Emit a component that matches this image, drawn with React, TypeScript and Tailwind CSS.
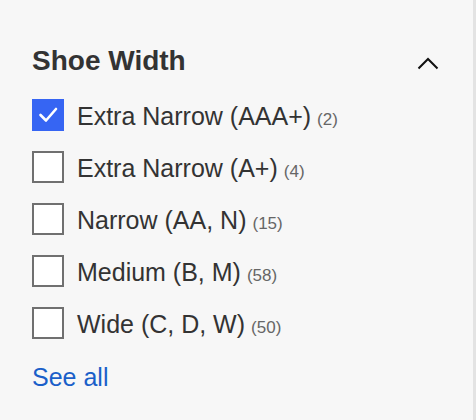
import { useState } from "react";

type Option = { label: string; count: number };

const OPTIONS: Option[] = [
  { label: "Extra Narrow (AAA+)", count: 2 },
  { label: "Extra Narrow (A+)", count: 4 },
  { label: "Narrow (AA, N)", count: 15 },
  { label: "Medium (B, M)", count: 58 },
  { label: "Wide (C, D, W)", count: 50 },
];

function Check() {
  return (
    <svg width="32" height="32" viewBox="0 0 32 32" fill="none">
      <polyline
        points="8.5,16 14,21.5 24,10"
        stroke="#fff"
        strokeWidth="2.6"
        strokeLinecap="round"
        strokeLinejoin="round"
      />
    </svg>
  );
}

export default function App() {
  const [checked, setChecked] = useState<Record<number, boolean>>({ 0: true });

  return (
    <div className="h-[420px] w-[476px] border-r-[3px] border-[#e3e3e3] bg-[#f7f7f7] pl-8 pr-[33px] pt-[45px] font-['Liberation_Sans',Arial,sans-serif] text-[#333]">
      <div className="flex h-8 items-center justify-between">
        <h3 className="text-[28px] font-bold leading-8">Shoe Width</h3>
        <svg width="22" height="13" viewBox="0 0 22 13" fill="none" className="mr-[1px] mt-[5px]">
          <polyline points="1.5,11.5 11,2 20.5,11.5" stroke="#111" strokeWidth="2" />
        </svg>
      </div>

      <ul className="mt-3">
        {OPTIONS.map((o, i) => (
          <li key={o.label} className="flex h-[52px] items-center">
            <button
              type="button"
              onClick={() => setChecked((c) => ({ ...c, [i]: !c[i] }))}
              className={
                checked[i]
                  ? "flex h-8 w-8 shrink-0 items-center justify-center bg-[#3665f3]"
                  : "h-8 w-8 shrink-0 border-2 border-[#707070] bg-white"
              }
            >
              {checked[i] ? <Check /> : null}
            </button>
            <span className="ml-[13px] flex items-baseline pt-[3px]">
              <span className="text-[25px]">{o.label}</span>
              <span className="ml-[6px] text-[17px] text-[#666]">({o.count})</span>
            </span>
          </li>
        ))}
      </ul>

      <a href="#" className="mt-3 block text-[25px] leading-8 text-[#1a5fc9]">
        See all
      </a>
    </div>
  );
}
